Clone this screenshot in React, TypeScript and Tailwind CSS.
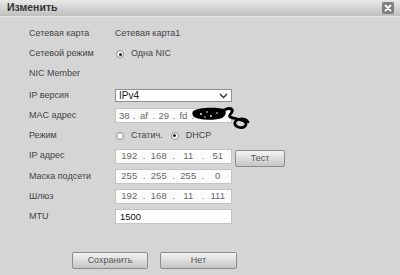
import React from 'react'

const font = { fontFamily: '"Liberation Sans", Arial, sans-serif' }

function Row({ label, children, h = 'h-[20px]' }: { label: string; children?: React.ReactNode; h?: string }) {
  return (
    <div className={`flex items-center ${h}`}>
      <div className="w-[86px] shrink-0 text-[9px] text-[#444]">{label}</div>
      <div className="flex items-center">{children}</div>
    </div>
  )
}

function Radio({ checked, label }: { checked?: boolean; label: string }) {
  return (
    <div className="flex items-center">
      <span className="ml-[1px] flex h-[8px] w-[8px] items-center justify-center rounded-full border border-[#8a8a8a] bg-white">
        {checked && <span className="h-[3px] w-[3px] rounded-full bg-[#222]" />}
      </span>
      <span className="ml-[7px] text-[9px] text-[#444]">{label}</span>
    </div>
  )
}

function IpField({ parts }: { parts: string[] }) {
  return (
    <div className="flex h-[15px] w-[117px] items-center border border-[#c4c4c4] bg-[#fbfbfb] text-[9.5px] text-[#6a6a6a]">
      {parts.map((p, i) => (
        <React.Fragment key={i}>
          <span className="flex-1 text-center">{p}</span>
          {i < parts.length - 1 && <span className="w-[3px] text-center">.</span>}
        </React.Fragment>
      ))}
    </div>
  )
}

function Btn({ label, w }: { label: string; w: string }) {
  return (
    <button
      className={`${w} h-[17px] rounded-[2px] border border-[#8c8c8c] bg-gradient-to-b from-[#f4f4f4] to-[#c6c6c6] text-[9px] text-[#555]`}
    >
      {label}
    </button>
  )
}

export default function App() {
  return (
    <div style={font} className="h-[275px] w-[400px] overflow-hidden bg-[#d5d5d5]">
      {/* title bar */}
      <div className="flex h-[17px] items-center justify-between border-b border-[#e6e6e6] bg-gradient-to-b from-[#e8e8e8] to-[#bfbfbf] pl-[7px] pr-[6px]">
        <span className="text-[10.5px] font-bold text-[#333]">Изменить</span>
        <span className="flex h-[12px] w-[12px] items-center justify-center rounded-[2px] bg-[#7d7d7d]">
          <svg width="8" height="8" viewBox="0 0 8 8">
            <path d="M1.5 1.5 L6.5 6.5 M6.5 1.5 L1.5 6.5" stroke="#fff" strokeWidth="1.8" strokeLinecap="round" />
          </svg>
        </span>
      </div>

      <div className="pl-[29px] pt-[7px]">
        <Row label="Сетевая карта">
          <span className="text-[9px] text-[#444]">Сетевая карта1</span>
        </Row>
        <Row label="Сетевой режим">
          <Radio checked label="Одна NIC" />
        </Row>
        <Row label="NIC Member" />

        <div className="mt-[1.5px]">
          <Row label="IP версия" h="h-[20.2px]">
            <div className="flex h-[13px] w-[117px] items-center justify-between border border-[#8e8e8e] bg-white pl-[3px] pr-[3px] text-[10px] text-[#222]">
              <span>IPv4</span>
              <svg width="9" height="6" viewBox="0 0 9 6">
                <path d="M1 1 L4.5 4.5 L8 1" stroke="#333" strokeWidth="1.4" fill="none" />
              </svg>
            </div>
          </Row>
          <Row label="MAC адрес" h="h-[20.2px]">
            <div className="relative">
              <IpField parts={['38', 'af', '29', 'fd', '', '']} />
              {/* censor scribble */}
              <svg className="absolute left-[77px] top-[-3px]" width="58" height="24" viewBox="0 0 58 24">
                <path d="M1 6 C8 2 22 2 32 4 C35 6 34 11 30 13 C22 16 8 15 2 12 C0 10 0 8 1 6 Z" fill="#000" />
                <path
                  d="M30 6 C36 3 40 3 40 6 C40 9 36 10 38 12 C42 14 50 14 53 17 C56 20 52 24 46 22 C41 20 42 15 48 14 C52 13 55 15 56 17"
                  stroke="#000"
                  strokeWidth="2.6"
                  fill="none"
                  strokeLinecap="round"
                />
                <path d="M34 4 C38 2 42 4 40 7" stroke="#000" strokeWidth="2.4" fill="none" strokeLinecap="round" />
                <circle cx="9" cy="9" r="0.9" fill="#fff" />
                <circle cx="15" cy="7" r="0.8" fill="#fff" />
                <circle cx="19" cy="11" r="0.9" fill="#fff" />
                <circle cx="25" cy="8" r="0.8" fill="#fff" />
                <circle cx="13" cy="12" r="0.7" fill="#fff" />
              </svg>
            </div>
          </Row>
          <Row label="Режим" h="h-[20.2px]">
            <Radio label="Статич." />
            <div className="ml-[7px]">
              <Radio checked label="DHCP" />
            </div>
          </Row>
          <Row label="IP адрес" h="h-[20.2px]">
            <IpField parts={['192', '168', '11', '51']} />
            <div className="ml-[3px]">
              <Btn label="Тест" w="w-[50px]" />
            </div>
          </Row>
          <Row label="Маска подсети" h="h-[20.2px]">
            <IpField parts={['255', '255', '255', '0']} />
          </Row>
          <Row label="Шлюз" h="h-[20.2px]">
            <IpField parts={['192', '168', '11', '111']} />
          </Row>
          <Row label="MTU" h="h-[20.2px]">
            <div className="flex h-[15px] w-[117px] items-center border border-[#c4c4c4] bg-white pl-[4px] text-[9.5px] text-[#111]">
              1500
            </div>
          </Row>
        </div>
      </div>

      <div className="mt-[25px] flex gap-[12px] pl-[72px]">
        <Btn label="Сохранить" w="w-[76px]" />
        <Btn label="Нет" w="w-[77px]" />
      </div>
    </div>
  )
}
